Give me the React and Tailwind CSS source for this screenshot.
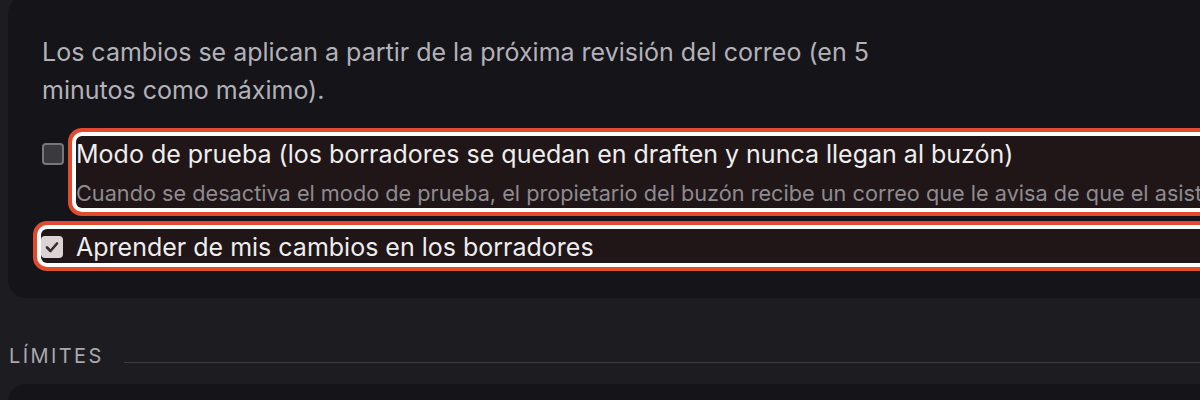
import React from "react";

const hl = "shadow-[0_0_0_4px_#ffffff,0_0_0_8px_#e04a2f] rounded-[6px] bg-[#201517]";

export default function App() {
  return (
    <div className="w-[1200px] h-[400px] overflow-hidden bg-[#1d1c21] font-['Inter','Noto_Sans',sans-serif]">
      <div className="ml-2 -mt-1 w-[1260px] rounded-[18px] bg-[#151418] pl-[34px] pt-[38px] pb-[35px]">
        <p className="w-[860px] text-[25px] leading-[37.5px] text-[#b3b2b8]">
          Los cambios se aplican a partir de la próxima revisión del correo (en 5 minutos como máximo).
        </p>
        <div className="mt-[27px] flex items-start">
          <div className="mt-[7px] h-[22px] w-[22px] shrink-0 rounded-[4px] border-2 border-[#77767b] bg-[#3a393d]" />
          <div className={`ml-[12px] flex-1 min-w-0 overflow-hidden ${hl}`}>
            <div className="whitespace-nowrap text-[25px] leading-[37.5px] text-[#eeeeee]">
              Modo de prueba (los borradores se quedan en draften y nunca llegan al buzón)
            </div>
            <div className="mt-[4px] whitespace-nowrap text-[21.7px] leading-[30px] text-[#8d8c91]">
              Cuando se desactiva el modo de prueba, el propietario del buzón recibe un correo que le avisa de que el asistente está activo.
            </div>
          </div>
        </div>
        <label className={`mt-[21px] -ml-[1px] flex h-[34px] items-center ${hl}`}>
          <span className="mt-[2px] flex h-[22px] w-[22px] shrink-0 items-center justify-center rounded-[4px] bg-[#dcd4d4]">
            <svg width="16" height="16" viewBox="0 0 16 16" fill="none">
              <path d="M3 8.5 L6.5 12 L13 4.5" stroke="#3a2b2d" strokeWidth="2.6" strokeLinecap="round" strokeLinejoin="round" />
            </svg>
          </span>
          <span className="ml-[13px] mt-[2px] whitespace-nowrap text-[25px] leading-[34px] text-[#eeeeee]">
            Aprender de mis cambios en los borradores
          </span>
        </label>
      </div>
      <div className="mt-[45px] flex items-center pl-[9px]">
        <span className="text-[20px] leading-[27px] tracking-[0.12em] text-[#a9a8ae]">LÍMITES</span>
        <div className="ml-[20px] mt-[12px] h-[1px] flex-1 bg-[#3c3b41]" />
      </div>
      <div className="ml-2 mt-[14px] h-[80px] w-[1260px] rounded-[18px] bg-[#151418]" />
    </div>
  );
}
